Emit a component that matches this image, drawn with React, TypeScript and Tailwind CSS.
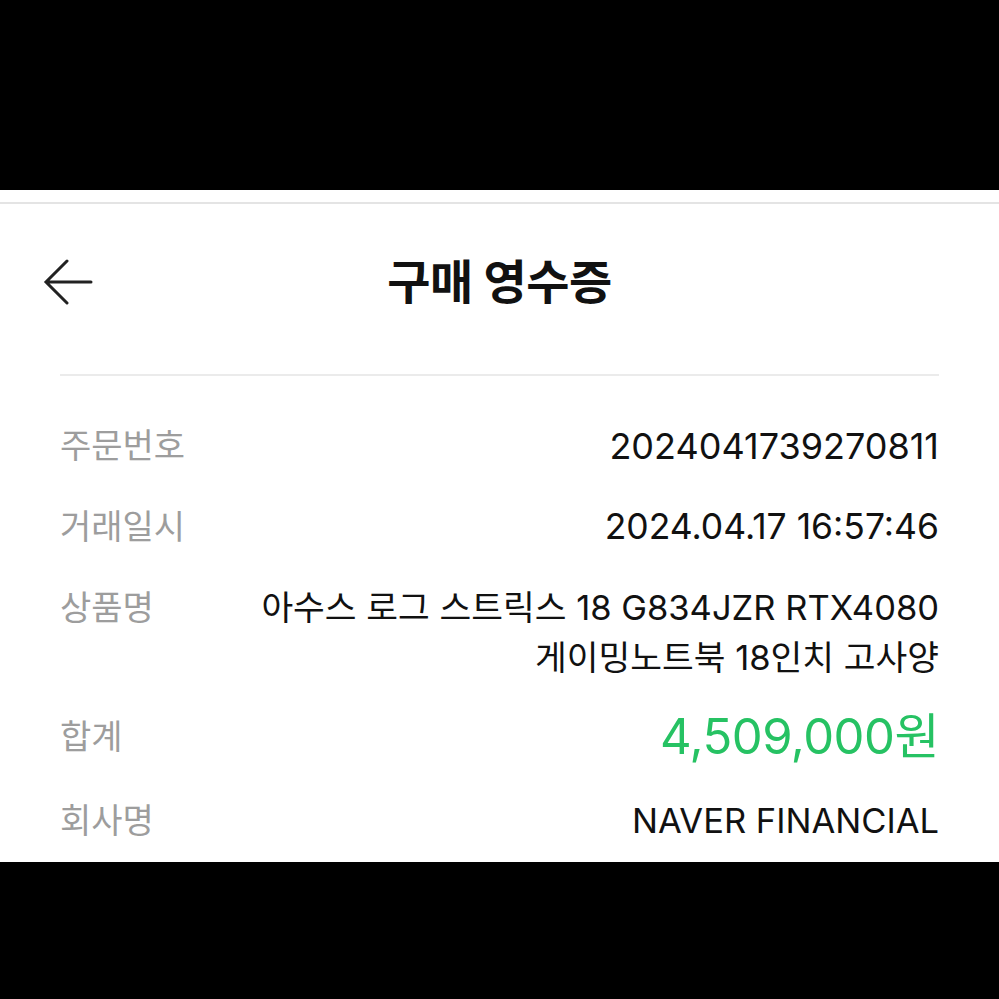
const font = { fontFamily: 'Inter, "Noto Sans CJK KR", sans-serif' };

const rows = [
  { label: '주문번호', value: ['2024041739270811'], size: 'text-[36px]' },
  { label: '거래일시', value: ['2024.04.17 16:57:46'], size: 'text-[35.5px]' },
  {
    label: '상품명',
    value: ['아수스 로그 스트릭스 18 G834JZR RTX4080', '게이밍노트북 18인치 고사양'],
    size: 'text-[34.5px]',
  },
];

function BackArrow() {
  return (
    <svg width="52" height="46" viewBox="0 0 52 46" fill="none">
      <path d="M49 23H5M25 2L4 23l21 21" stroke="#222" strokeWidth="3" strokeLinecap="round" strokeLinejoin="miter" />
    </svg>
  );
}

export default function App() {
  return (
    <div className="w-[999px] h-[999px] bg-black flex flex-col" style={font}>
      <div className="h-[190px] shrink-0" />
      <div className="h-[672px] shrink-0 bg-white flex flex-col">
        <div className="h-[14px] border-b-2 border-[#e4e4e4]" />
        {/* Header */}
        <div className="h-[156px] relative flex items-center justify-center">
          <div className="absolute left-[42px] top-[55px]">
            <BackArrow />
          </div>
          <h1 className="text-[47px] font-bold text-[#111] tracking-[-0.5px]">구매 영수증</h1>
        </div>
        <div className="mx-[60px] mt-[14px] h-[2px] bg-[#ebebeb]" />

        {/* Rows */}
        <div className="px-[60px] pt-[45px] flex flex-col gap-[31px]">
          {rows.map((r) => (
            <div key={r.label} className="flex justify-between items-start">
              <span className="text-[34px] leading-[50px] text-[#9d9d9d]">{r.label}</span>
              <div className="flex flex-col items-end">
                {r.value.map((v) => (
                  <span key={v} className={`${r.size} leading-[50px] text-[#111]`}>{v}</span>
                ))}
              </div>
            </div>
          ))}
          <div className="flex justify-between items-center h-[52px] -mt-[3px]">
            <span className="text-[34px] leading-[50px] text-[#9d9d9d]">합계</span>
            <span className="text-[49px] leading-[52px] text-[#26c263] tracking-[-0.5px]">4,509,000원</span>
          </div>
          <div className="flex justify-between items-center mt-[2px]">
            <span className="text-[34px] leading-[50px] text-[#9d9d9d]">회사명</span>
            <span className="text-[34.5px] leading-[50px] text-[#111]">NAVER FINANCIAL</span>
          </div>
        </div>
      </div>
    </div>
  );
}
